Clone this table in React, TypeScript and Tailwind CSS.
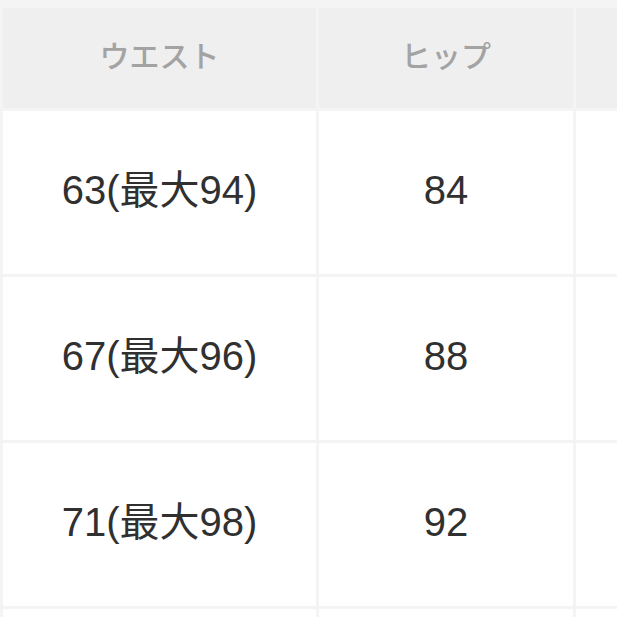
import React from 'react';

const ROWS = [
  { waist: '63(最大94)', hip: '84' },
  { waist: '67(最大96)', hip: '88' },
  { waist: '71(最大98)', hip: '92' },
  { waist: '', hip: '' },
];

const App: React.FC = () => {
  return (
    <div
      className="w-[617px] h-[617px] overflow-hidden bg-[#f4f4f4]"
      style={{ fontFamily: '"Liberation Sans", "Noto Sans CJK JP", sans-serif' }}
    >
      <div className="grid grid-cols-[313px_254px_220px] gap-[3px] pt-[8px] pl-[3px] w-[800px]">
        {/* Header */}
        <div className="h-[100px] bg-[#efefef] flex items-center justify-center text-[30px] font-medium text-[#a3a3a3] pb-[4px]">
          ウエスト
        </div>
        <div className="h-[100px] bg-[#efefef] flex items-center justify-center text-[30px] font-medium text-[#a3a3a3] pb-[4px]">
          ヒップ
        </div>
        <div className="h-[100px] bg-[#efefef]" />

        {ROWS.map((row, i) => (
          <React.Fragment key={i}>
            <div className="h-[163px] bg-white flex items-center justify-center text-[40px] text-[#303030] pb-[6px]">
              {row.waist}
            </div>
            <div className="h-[163px] bg-white flex items-center justify-center text-[40px] text-[#303030] pb-[6px]">
              {row.hip}
            </div>
            <div className="h-[163px] bg-white" />
          </React.Fragment>
        ))}
      </div>
    </div>
  );
};

export default App;
